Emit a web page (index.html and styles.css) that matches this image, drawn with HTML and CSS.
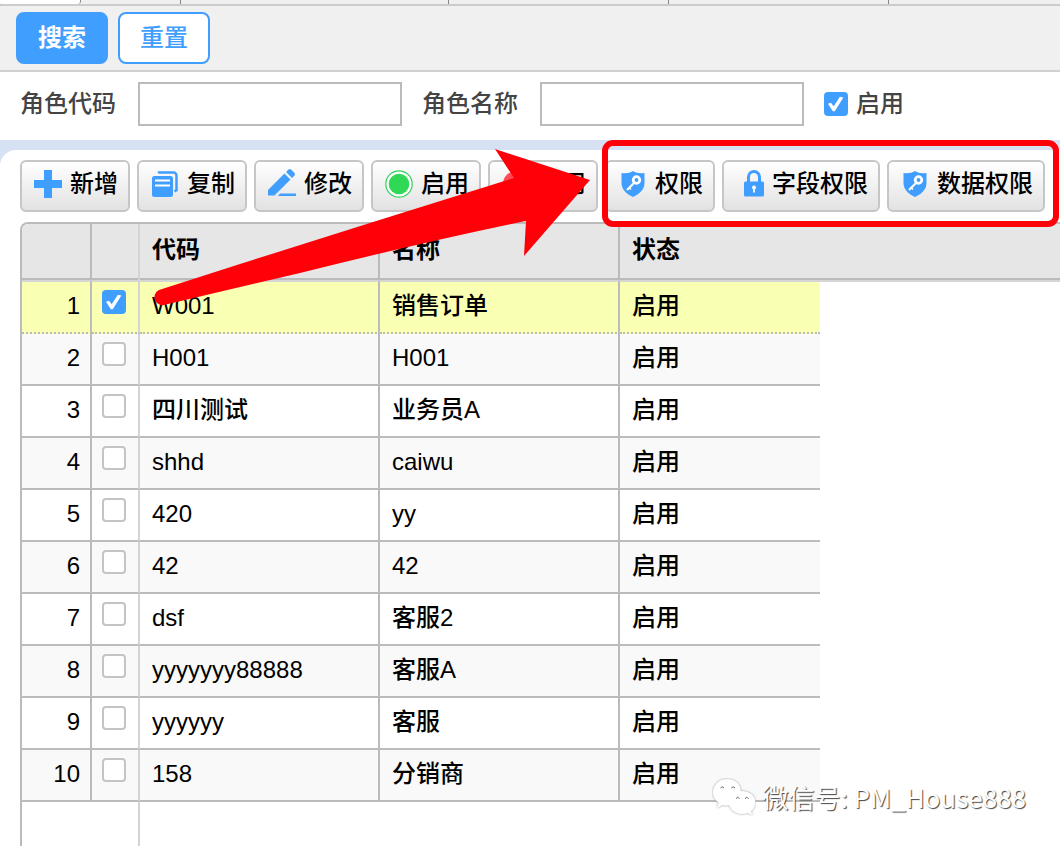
FILE: index.html
```html
<!DOCTYPE html>
<html lang="zh-CN">
<head>
<meta charset="utf-8">
<title>角色权限</title>
<link rel="stylesheet" href="styles.css">
</head>
<body>
<svg class="defs" aria-hidden="true">
  <symbol id="shield" viewBox="0 0 28 28">
    <path fill="#409eff" d="M14 1c3 2 7 2.600 11.500 2v10c0 6.500-5 11-11.500 14C7.500 24 2.500 19.500 2.500 13V3C7 3.600 11 3 14 1z"/>
    <path fill="none" stroke="#fff" stroke-width="2.200" d="M15.500 12.500L8 20"/>
    <path fill="none" stroke="#fff" stroke-width="1.500" d="M10 17.500l2 2"/>
    <circle cx="17.500" cy="10" r="3.300" fill="none" stroke="#fff" stroke-width="2.800"/>
  </symbol>
</svg>
<div class="page">
  <div class="tabs">
    <span class="tab tab-active"></span><span class="tab tab-small"></span><span class="tab tab-wide"></span><span class="tab"></span><span class="tab"></span>
  </div>
  <div class="actions">
    <button class="btn btn-primary" type="button">搜索</button>
    <button class="btn" type="button">重置</button>
  </div>
  <form class="filters">
    <label class="field">角色代码<input class="text" type="text"></label>
    <label class="field">角色名称<input class="text" type="text"></label>
    <label class="option"><input class="check" type="checkbox" checked>启用</label>
  </form>
  <main class="backdrop">
    <section class="panel">
      <div class="toolbar">
        <button class="tool" type="button">
          <svg class="icon" viewBox="0 0 28 28"><path fill="#409eff" d="M10 0h8v10h10v8H18v10h-8V18H0v-8h10z"/></svg>新增</button>
        <button class="tool" type="button">
          <svg class="icon" viewBox="0 0 28 28"><path fill="none" stroke="#409eff" stroke-width="2.500" d="M8 3.500V2.500h14.500a3 3 0 0 1 3 3V20l-2 1.500"/><rect x="1" y="6" width="21" height="21" rx="2.500" fill="#409eff"/><path stroke="#fff" stroke-width="2" d="M4 10.500h15M4 15.500h15"/></svg>复制</button>
        <button class="tool" type="button">
          <svg class="icon" viewBox="0 0 28 28"><path fill="#409eff" d="M16.500 3.500l6 6L6.500 25.500H0V20zM18 2l2.500-2.500q1.200-1 2.500 0L26.500 3q1 1.200 0 2.500L24 8zM12 23.500h16v2.500H10z"/></svg>修改</button>
        <button class="tool" type="button">
          <svg class="icon" viewBox="0 0 28 28"><circle cx="14" cy="14" r="13.200" fill="#fff" stroke="#30d158" stroke-width="1.200"/><circle cx="14" cy="14" r="10.300" fill="#30d955"/></svg>启用</button>
        <button class="tool" type="button">
          <svg class="icon" viewBox="0 0 28 28"><circle cx="14" cy="14" r="13" fill="#ff4b55"/></svg>禁用</button>
        <button class="tool" type="button">
          <svg class="icon"><use href="#shield"/></svg>权限</button>
        <button class="tool" type="button">
          <svg class="icon" viewBox="0 0 28 28"><rect x="8" y="11.500" width="20" height="15" rx="1.500" fill="#409eff"/><path fill="none" stroke="#409eff" stroke-width="3" d="M12.500 12V7a5.500 5.500 0 0 1 11 0v5"/><circle cx="18" cy="17.500" r="2" fill="#fff"/><path stroke="#fff" stroke-width="1.800" d="M18 18v4.500"/></svg>字段权限</button>
        <button class="tool" type="button">
          <svg class="icon"><use href="#shield"/></svg>数据权限</button>
      </div>
      <div class="grid">
        <table class="table">
          <colgroup><col class="col-number"><col class="col-check"><col class="col-text"><col class="col-text"><col class="col-status"><col></colgroup>
          <thead>
            <tr><th></th><th class="frozen"></th><th>代码</th><th>名称</th><th class="last">状态</th><th class="rest"></th></tr>
          </thead>
          <tbody>
            <tr class="selected"><td>1</td><td class="frozen"><input class="check" type="checkbox" aria-label="选择 1" checked></td><td>W001</td><td>销售订单</td><td class="last">启用</td></tr>
            <tr><td>2</td><td class="frozen"><input class="check" type="checkbox" aria-label="选择 2"></td><td>H001</td><td>H001</td><td class="last">启用</td></tr>
            <tr><td>3</td><td class="frozen"><input class="check" type="checkbox" aria-label="选择 3"></td><td>四川测试</td><td>业务员A</td><td class="last">启用</td></tr>
            <tr><td>4</td><td class="frozen"><input class="check" type="checkbox" aria-label="选择 4"></td><td>shhd</td><td>caiwu</td><td class="last">启用</td></tr>
            <tr><td>5</td><td class="frozen"><input class="check" type="checkbox" aria-label="选择 5"></td><td>420</td><td>yy</td><td class="last">启用</td></tr>
            <tr><td>6</td><td class="frozen"><input class="check" type="checkbox" aria-label="选择 6"></td><td>42</td><td>42</td><td class="last">启用</td></tr>
            <tr><td>7</td><td class="frozen"><input class="check" type="checkbox" aria-label="选择 7"></td><td>dsf</td><td>客服2</td><td class="last">启用</td></tr>
            <tr><td>8</td><td class="frozen"><input class="check" type="checkbox" aria-label="选择 8"></td><td>yyyyyyy88888</td><td>客服A</td><td class="last">启用</td></tr>
            <tr><td>9</td><td class="frozen"><input class="check" type="checkbox" aria-label="选择 9"></td><td>yyyyyy</td><td>客服</td><td class="last">启用</td></tr>
            <tr><td>10</td><td class="frozen"><input class="check" type="checkbox" aria-label="选择 10"></td><td>158</td><td>分销商</td><td class="last">启用</td></tr>
          </tbody>
        </table>
        <div class="frozen-rest"></div>
      </div>
    </section>
  </main>
  <svg class="annotation" width="1060" height="320" viewBox="0 0 1060 320" aria-hidden="true">
    <rect x="605" y="143" width="451" height="81" rx="8" fill="none" stroke="#ff0008" stroke-width="6"/>
    <path fill="#ff0008" d="M159 290L240 264L373 222L514 178L495 149L590 180L524 256L526 221Q420 243 300 273L166 304.500A7.500 7.500 0 0 1 159 290z"/>
  </svg>
  <div class="watermark">
    <svg class="wechat" viewBox="0 0 44 38" aria-hidden="true">
      <g class="bubble" fill="#fff">
        <path d="M15 1C7 1 1 7 1 14.500c0 4 2 7.500 5.500 10L5 30l6-3q3 .800 6 .500h3l9-13C29 6 23 1 15 1z"/>
        <path d="M30 13c-7.500 0-13 5-13 11.500S22.500 36 30 36q3 0 5.500-1l5 2.500-1.500-4c2.500-2 4.500-5.500 4.500-9C43.500 18 37.500 13 30 13z"/>
      </g>
      <path fill="none" stroke="#666" stroke-width="1" d="M8.500 10q1.500-2.500 3.500 0M19.500 10q1.500-2.500 3.500 0M24 20.500q1.500-2.500 3.500 0M33 20.500q1.500-2.500 3.500 0"/>
    </svg>
    <span>微信号: PM_House888</span>
  </div>
</div>
</body>
</html>
```
FILE: styles.css
```css
* {
  box-sizing: border-box;
}

body {
  margin: 0;
  background: #fff;
  color: #000;
  font: 500 24px/36px "Liberation Sans", "Noto Sans CJK SC", sans-serif;
}

button,
input {
  font: inherit;
}

.defs {
  display: none;
}

.page {
  position: relative;
  display: flex;
  flex-direction: column;
  min-height: 100vh;
  overflow: hidden;
}

.tabs {
  display: flex;
  height: 6px;
  background: #f0f0f0;
  border-bottom: 2px solid #ccc;
}

.tab {
  width: 220px;
  border-right: 1px solid #8c8680;
}

.tab-active {
  width: 81px;
  background: #fff;
  border-radius: 0 0 3px 3px;
}

.tab-small {
  width: 100px;
}

.tab-wide {
  width: 268px;
}

.actions {
  display: flex;
  gap: 10px;
  padding: 6px 16px;
  background: #f0f0f0;
  border-bottom: 2px solid #d0d0d0;
}

.btn {
  width: 92px;
  height: 52px;
  padding: 0;
  color: #409eff;
  background: #fff;
  border: 2px solid #409eff;
  border-radius: 8px;
}

.btn-primary {
  color: #fff;
  background: #409eff;
  font-weight: bold;
}

.filters {
  display: flex;
  align-items: center;
  gap: 20px;
  padding: 10px 20px 14px;
  color: #444;
}

.field {
  display: flex;
  align-items: center;
  gap: 22px;
}

.text {
  width: 264px;
  height: 44px;
  padding: 0 8px;
  background: #fff;
  border: 2px solid #bbb;
}

.option {
  display: flex;
  align-items: center;
  gap: 8px;
}

.check {
  appearance: none;
  display: block;
  width: 24px;
  height: 24px;
  margin: 0;
  background: #fff;
  border: 2px solid #c4c4c4;
  border-radius: 4px;
}

.check:checked {
  background: #409eff;
  border-color: #409eff;
}

.check:checked::before {
  content: "";
  display: block;
  width: 16px;
  height: 16px;
  margin: 2px;
  background: #fff;
  clip-path: polygon(0 48%, 18% 42%, 36% 64%, 74% 4%, 96% 10%, 42% 96%, 30% 96%);
}

.backdrop {
  display: flex;
  flex: 1;
  padding-top: 10px;
  background: #d6e2f4;
}

.panel {
  display: flex;
  flex: 1;
  flex-direction: column;
  gap: 10px;
  min-width: 0;
  padding: 10px 0 0 20px;
  background: #fff;
  border-radius: 16px 0 0 0;
}

.toolbar {
  display: flex;
  gap: 7px;
}

.tool {
  display: flex;
  flex: none;
  align-items: center;
  gap: 8px;
  height: 52px;
  padding: 0 10px 4px 12px;
  color: #000;
  white-space: nowrap;
  background: linear-gradient(#fff, #e2e2e2);
  border: 2px solid #c6c6c6;
  border-radius: 6px;
}

.icon {
  flex: none;
  width: 28px;
  height: 28px;
  overflow: visible;
}

.grid {
  display: flex;
  flex: 1;
  flex-direction: column;
  overflow: hidden;
  border: solid #bbb;
  border-width: 2px 0 0 2px;
  border-radius: 8px 0 0 0;
}

.table {
  width: 100%;
  table-layout: fixed;
  border-spacing: 0;
}

.col-number {
  width: 70px;
}

.col-check {
  width: 48px;
}

.col-text {
  width: 240px;
}

.col-status {
  width: 200px;
}

th {
  height: 58px;
  padding: 0 12px 4px;
  text-align: left;
  background: #e6e6e6;
  border: solid;
  border-width: 0 2px 2px 0;
  border-color: #bbb #bbb #d6d6d6;
  box-shadow: inset 0 -2px #bbb;
}

td {
  height: 52px;
  padding: 0 12px 2px;
  border: solid #bbb;
  border-width: 0 2px 2px 0;
}

td:first-child {
  padding-right: 10px;
  text-align: right;
}

.frozen {
  padding: 0 10px 10px;
  border-right-color: #d4d4d4;
}

.last,
.rest {
  border-right: 0;
}

tbody tr:nth-child(even) td {
  background: #f9f9f9;
}

.selected td {
  background: #f9ffb3;
  border-bottom-style: dotted;
}

.frozen-rest {
  flex: 1;
  width: 118px;
  border-right: 2px solid #d4d4d4;
}

.annotation {
  position: absolute;
  top: 0;
  left: 0;
  pointer-events: none;
}

.watermark {
  position: absolute;
  right: 34px;
  bottom: 30px;
  display: flex;
  align-items: center;
  gap: 7px;
  color: #fff;
  font: 26px/38px "Noto Sans CJK SC", sans-serif;
  text-shadow: 1px 1px 1px #444;
}

.wechat {
  width: 44px;
  height: 38px;
}

.bubble {
  filter: drop-shadow(0 0 1px #999);
}
```
